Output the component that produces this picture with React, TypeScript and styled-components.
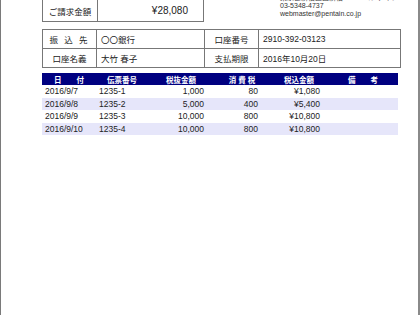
import React from "react";
import styled, { createGlobalStyle } from "styled-components";

const GlobalStyle = createGlobalStyle`
  html, body {
    margin: 0;
    padding: 0;
    background: #fff;
  }
  body {
    font-family: "Liberation Sans", "Noto Sans CJK JP", sans-serif;
    color: #222;
  }
`;

const Page = styled.div`
  box-sizing: border-box;
  width: 420px;
  height: 315px;
  overflow: hidden;
  background: #fff;
  border-left: 1px solid #7a7a7a;
  border-right: 2px solid #8a8a8a;
`;

const Sheet = styled.div`
  margin: -1px 0 0 41px;
  width: 358px;
`;

const TopRow = styled.div`
  display: flex;
  justify-content: space-between;
  align-items: flex-start;
`;

const TotalBox = styled.div`
  display: flex;
  width: 162px;
  height: 23px;
  box-sizing: border-box;
  border: 1px solid #777;
`;

const TotalLabel = styled.div`
  width: 54px;
  border-right: 1px solid #777;
  display: flex;
  align-items: center;
  justify-content: center;
  font-size: 8.5px;
`;

const TotalValue = styled.div`
  flex: 1;
  display: flex;
  align-items: center;
  justify-content: flex-end;
  padding-right: 15px;
  font-size: 10px;
`;

const Address = styled.div`
  margin-top: -5px;
  width: 120px;
  font-size: 7px;
  line-height: 8px;
  color: #333;
  white-space: nowrap;
`;

const InfoTable = styled.table`
  margin-top: 7px;
  width: 358px;
  border-collapse: collapse;
  table-layout: fixed;
  font-size: 8.5px;

  td {
    border: 1px solid #777;
    height: 18px;
    padding: 0;
  }
`;

const InfoLabel = styled.td<{ $spread?: boolean }>`
  text-align: center;
  color: #222;
  letter-spacing: ${({ $spread }) => ($spread ? "2px" : "0")};
`;

const InfoValue = styled.td`
  padding-left: 4px !important;
`;

const Bank = styled.span`
  font-family: "Noto Sans CJK JP", sans-serif;
`;

const ListTable = styled.table`
  margin-top: 5px;
  width: 356px;
  border-collapse: collapse;
  table-layout: fixed;
  font-size: 8.5px;
`;

const HeadCell = styled.th`
  background: #000080;
  color: #fff;
  font-weight: bold;
  height: 12px;
  padding: 0;
  text-align: center;
  font-size: 7.5px;
`;

const Row = styled.tr<{ $alt: boolean }>`
  background: ${({ $alt }) => ($alt ? "#e6e6fa" : "#fff")};
  height: 12.6px;
`;

const Cell = styled.td<{ $align?: "left" | "right"; $pad?: number }>`
  padding: 0 ${({ $pad }) => $pad ?? 0}px 0 ${({ $align }) => ($align === "right" ? 0 : 3)}px;
  text-align: ${({ $align }) => $align ?? "left"};
  white-space: nowrap;
`;

const rows = [
  { date: "2016/9/7", no: "1235-1", net: "1,000", tax: "80", total: "¥1,080" },
  { date: "2016/9/8", no: "1235-2", net: "5,000", tax: "400", total: "¥5,400" },
  { date: "2016/9/9", no: "1235-3", net: "10,000", tax: "800", total: "¥10,800" },
  { date: "2016/9/10", no: "1235-4", net: "10,000", tax: "800", total: "¥10,800" },
];

export default function App() {
  return (
    <>
      <GlobalStyle />
      <Page>
        <Sheet>
          <TopRow>
            <TotalBox>
              <TotalLabel>ご請求金額</TotalLabel>
              <TotalValue>¥28,080</TotalValue>
            </TotalBox>
            <Address>
              <div>東京都新宿区西新宿 1-1-1 ペンテイン</div>
              <div>03-5348-4737</div>
              <div>webmaster@pentain.co.jp</div>
            </Address>
          </TopRow>

          <InfoTable>
            <colgroup>
              <col style={{ width: 54 }} />
              <col style={{ width: 108 }} />
              <col style={{ width: 54 }} />
              <col style={{ width: 142 }} />
            </colgroup>
            <tbody>
              <tr>
                <InfoLabel $spread>振 込 先</InfoLabel>
                <InfoValue><Bank>〇〇銀行</Bank></InfoValue>
                <InfoLabel>口座番号</InfoLabel>
                <InfoValue>2910-392-03123</InfoValue>
              </tr>
              <tr>
                <InfoLabel>口座名義</InfoLabel>
                <InfoValue>大竹 春子</InfoValue>
                <InfoLabel>支払期限</InfoLabel>
                <InfoValue>2016年10月20日</InfoValue>
              </tr>
            </tbody>
          </InfoTable>

          <ListTable>
            <colgroup>
              <col style={{ width: 54 }} />
              <col style={{ width: 52 }} />
              <col style={{ width: 66 }} />
              <col style={{ width: 56 }} />
              <col style={{ width: 58 }} />
              <col style={{ width: 70 }} />
            </colgroup>
            <thead>
              <tr>
                <HeadCell>日　　付</HeadCell>
                <HeadCell>伝票番号</HeadCell>
                <HeadCell>税抜金額</HeadCell>
                <HeadCell>消 費 税</HeadCell>
                <HeadCell>税込金額</HeadCell>
                <HeadCell>備　　考</HeadCell>
              </tr>
            </thead>
            <tbody>
              {rows.map((r, i) => (
                <Row key={r.no} $alt={i % 2 === 1}>
                  <Cell>{r.date}</Cell>
                  <Cell>{r.no}</Cell>
                  <Cell $align="right" $pad={10}>{r.net}</Cell>
                  <Cell $align="right" $pad={12}>{r.tax}</Cell>
                  <Cell $align="right" $pad={8}>{r.total}</Cell>
                  <Cell />
                </Row>
              ))}
            </tbody>
          </ListTable>
        </Sheet>
      </Page>
    </>
  );
}
